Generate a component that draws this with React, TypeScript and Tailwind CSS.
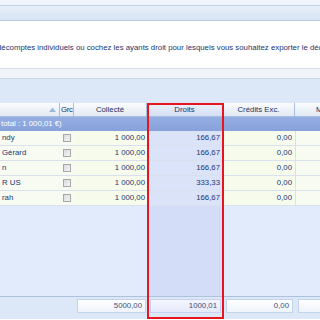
import React from "react";

const rows = [
  { name: "ndy", c: "1 000,00", d: "166,67", e: "0,00" },
  { name: "Gérard", c: "1 000,00", d: "166,67", e: "0,00" },
  { name: "n", c: "1 000,00", d: "166,67", e: "0,00" },
  { name: "R US", c: "1 000,00", d: "333,33", e: "0,00" },
  { name: "rah", c: "1 000,00", d: "166,67", e: "0,00" },
];

const cols = "grid grid-cols-[60px_14px_73px_76px_72px_25px]";

export default function App() {
  return (
    <div
      className="relative w-[320px] h-[320px] overflow-hidden flex flex-col text-[7.8px] text-[#1a3263]"
      style={{ fontFamily: '"Liberation Sans", Arial, sans-serif' }}
    >
      <div className="h-[5px] bg-[#f1f5fb]" />
      <div className="h-[1px] bg-[#c3d2e6]" />
      <div className="h-[14px] bg-gradient-to-b from-[#e7eef9] to-[#d7e4f5]" />
      <div className="h-[1px] bg-[#b9cbe2]" />
      <div className="h-[47px] bg-white pt-[22px] leading-[10px] whitespace-nowrap overflow-hidden">
        <span className="ml-[-3px] text-[#1b3670]">
          décomptes individuels ou cochez les ayants droit pour lesquels vous souhaitez exporter le décompte
        </span>
      </div>
      <div className="h-[1px] bg-[#d3ddeb]" />
      <div className="h-[9px] bg-[#f0f3f8]" />
      <div className="h-[1px] bg-[#c8d5e7]" />
      <div className="h-[24px] bg-[#dce8f7]" />

      {/* header */}
      <div className={`${cols} h-[14px] bg-gradient-to-b from-[#fbfcfe] to-[#e1e9f5] border-b border-[#a9bedb] text-[#1a3260]`}>
        <div className="relative border-r border-[#a9bedb]">
          <svg className="absolute left-[49px] top-[4px]" width="7" height="5" viewBox="0 0 7 5">
            <path d="M0 5 L3.5 0.5 L7 5 Z" fill="#9fb7de" />
          </svg>
        </div>
        <div className="border-r border-[#a9bedb] pl-[1px] leading-[13px] overflow-hidden whitespace-nowrap tracking-[-0.3px]">Grc</div>
        <div className="border-r border-[#a9bedb] text-center leading-[13px]">Collecté</div>
        <div className="border-r border-[#a9bedb] text-center leading-[13px] bg-gradient-to-b from-[#eef2fb] to-[#d3def3]">Droits</div>
        <div className="border-r border-[#a9bedb] text-center leading-[13px]">Crédits Exc.</div>
        <div className="pl-[21px] leading-[13px] overflow-hidden whitespace-nowrap">Mo</div>
      </div>

      {/* group row */}
      <div className="h-[14px] bg-gradient-to-b from-[#95aee3] to-[#87a1dc] text-white leading-[14px] pl-[1px] whitespace-nowrap">
        total : 1 000,01 €)
      </div>

      {/* data rows */}
      {rows.map((r, i) => (
        <div key={i} className={`${cols} h-[15px] border-b border-[#d8e1ed] leading-[14px]`}>
          <div className="bg-[#f8fbf2] pl-[2px] whitespace-nowrap overflow-hidden text-[#1a3670]">{r.name}</div>
          <div className="bg-[#f8fbf2] flex items-center justify-center">
            <div className="w-[8px] h-[8px] border border-[#a7a7a7] bg-gradient-to-br from-[#dcdcdc] to-[#f4f4f4]" />
          </div>
          <div className="bg-[#f6fbec] text-right pr-[2px] text-[#1f3672]">{r.c}</div>
          <div className="bg-[#dae3f8] text-right pr-[3px] text-[#1f3672]">{r.d}</div>
          <div className="bg-[#f6fbec] text-right pr-[3px] border-l border-[#d8e1ed] text-[#1f3672]">{r.e}</div>
          <div className="bg-[#f8fbf2] border-l border-[#d8e1ed]" />
        </div>
      ))}

      {/* empty area */}
      <div className={`${cols} h-[90px] bg-[#e1ebfb]`}>
        <div />
        <div />
        <div />
        <div className="bg-[#d4ddf8]" />
        <div />
        <div />
      </div>

      {/* footer */}
      <div className={`${cols} h-[23px] border-t border-[#aec2de] bg-[#dce7f7] pt-[2px] text-[#3b4f7f]`}>
        <div />
        <div />
        <div className="pl-[3px] pr-[1px]">
          <div className="h-[14px] border border-[#c3d3ea] bg-gradient-to-b from-white to-[#eef3fb] text-right pr-[3px] leading-[12px]">5000,00</div>
        </div>
        <div className="pl-[3px] pr-[2px]">
          <div className="h-[14px] border border-[#c9d1ee] bg-gradient-to-b from-[#f4f5fe] to-[#e6e9fa] text-right pr-[3px] leading-[12px]">1000,01</div>
        </div>
        <div className="pl-[3px] pr-[2px]">
          <div className="h-[14px] border border-[#c3d3ea] bg-gradient-to-b from-white to-[#eef3fb] text-right pr-[3px] leading-[12px]">0,00</div>
        </div>
        <div className="pl-[3px]">
          <div className="h-[14px] border border-r-0 border-[#c3d3ea] bg-gradient-to-b from-white to-[#eef3fb]" />
        </div>
      </div>

      {/* red annotation box */}
      <div className="absolute left-[147px] top-[103px] w-[77px] h-[216px] border-2 border-[#e8141e] pointer-events-none" />
    </div>
  );
}
